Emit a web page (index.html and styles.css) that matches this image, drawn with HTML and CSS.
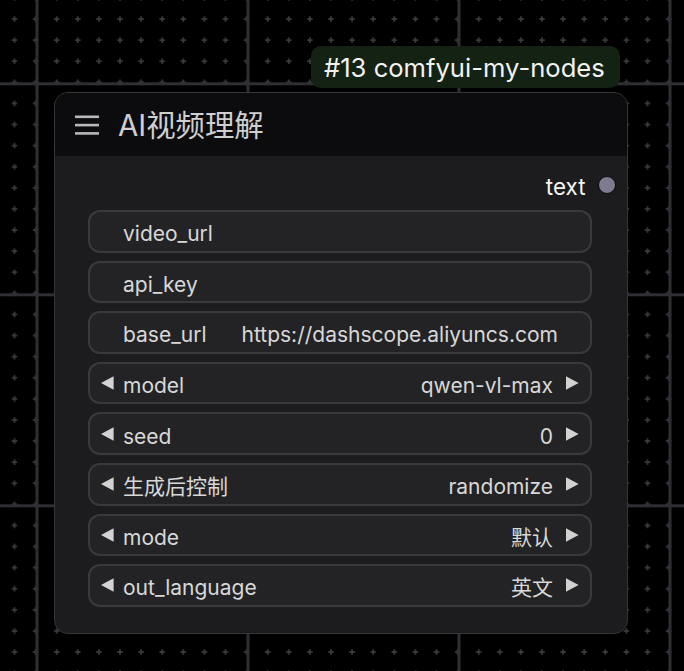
FILE: index.html
```html
<!DOCTYPE html>
<html lang="zh">
<head>
<meta charset="utf-8">
<title>AI视频理解</title>
<link rel="stylesheet" href="styles.css">
</head>
<body>
<div class="canvas">
  <svg class="grid" width="684" height="671" viewBox="0 0 684 671" aria-hidden="true">
    <defs>
      <pattern id="plus" x="3.95" y="8.45" width="21.1" height="21.1" patternUnits="userSpaceOnUse">
        <rect x="7.8" y="9.8" width="5.5" height="1.6" fill="#3d3e44"/>
        <rect x="9.75" y="7.85" width="1.6" height="5.5" fill="#3d3e44"/>
      </pattern>
      <pattern id="major" x="35.5" y="82.3" width="211" height="211" patternUnits="userSpaceOnUse">
        <rect x="0" y="0" width="3" height="211" fill="#2e2f33"/>
        <rect x="0" y="0" width="211" height="3" fill="#2e2f33"/>
      </pattern>
    </defs>
    <rect width="684" height="671" fill="#000"/>
    <rect width="684" height="671" fill="url(#plus)"/>
    <rect width="684" height="671" fill="url(#major)"/>
  </svg>

  <div class="badge">#13 comfyui-my-nodes</div>

  <div class="node">
    <div class="node-title">
      <svg class="menu-icon" width="24" height="20" viewBox="0 0 24 20" aria-hidden="true">
        <rect x="0" y="0.5" width="24" height="2.6" fill="#b8b8b8"/>
        <rect x="0" y="8.8" width="24" height="2.6" fill="#b8b8b8"/>
        <rect x="0" y="17.1" width="24" height="2.6" fill="#b8b8b8"/>
      </svg>
      <span class="title-text">AI视频理解</span>
    </div>
    <div class="node-body">
      <div class="output-row">
        <span class="output-label">text</span>
        <span class="slot"></span>
      </div>
      <div class="widgets">
        <div class="widget text-widget"><span class="label">video_url</span></div>
        <div class="widget text-widget"><span class="label">api_key</span></div>
        <div class="widget text-widget"><span class="label">base_url</span><span class="value">https://dashscope.aliyuncs.com</span></div>
        <div class="widget combo">
          <svg class="arrow left" width="13" height="14" viewBox="0 0 13 14" aria-hidden="true"><path d="M0 7 L12.6 0.3 L12.6 13.7 Z" fill="#d2d2d2"/></svg>
          <span class="label">model</span><span class="value">qwen-vl-max</span>
          <svg class="arrow right" width="13" height="14" viewBox="0 0 13 14" aria-hidden="true"><path d="M12.6 7 L0 0.3 L0 13.7 Z" fill="#d2d2d2"/></svg>
        </div>
        <div class="widget combo">
          <svg class="arrow left" width="13" height="14" viewBox="0 0 13 14" aria-hidden="true"><path d="M0 7 L12.6 0.3 L12.6 13.7 Z" fill="#d2d2d2"/></svg>
          <span class="label">seed</span><span class="value">0</span>
          <svg class="arrow right" width="13" height="14" viewBox="0 0 13 14" aria-hidden="true"><path d="M12.6 7 L0 0.3 L0 13.7 Z" fill="#d2d2d2"/></svg>
        </div>
        <div class="widget combo">
          <svg class="arrow left" width="13" height="14" viewBox="0 0 13 14" aria-hidden="true"><path d="M0 7 L12.6 0.3 L12.6 13.7 Z" fill="#d2d2d2"/></svg>
          <span class="label">生成后控制</span><span class="value">randomize</span>
          <svg class="arrow right" width="13" height="14" viewBox="0 0 13 14" aria-hidden="true"><path d="M12.6 7 L0 0.3 L0 13.7 Z" fill="#d2d2d2"/></svg>
        </div>
        <div class="widget combo">
          <svg class="arrow left" width="13" height="14" viewBox="0 0 13 14" aria-hidden="true"><path d="M0 7 L12.6 0.3 L12.6 13.7 Z" fill="#d2d2d2"/></svg>
          <span class="label">mode</span><span class="value">默认</span>
          <svg class="arrow right" width="13" height="14" viewBox="0 0 13 14" aria-hidden="true"><path d="M12.6 7 L0 0.3 L0 13.7 Z" fill="#d2d2d2"/></svg>
        </div>
        <div class="widget combo">
          <svg class="arrow left" width="13" height="14" viewBox="0 0 13 14" aria-hidden="true"><path d="M0 7 L12.6 0.3 L12.6 13.7 Z" fill="#d2d2d2"/></svg>
          <span class="label">out_language</span><span class="value">英文</span>
          <svg class="arrow right" width="13" height="14" viewBox="0 0 13 14" aria-hidden="true"><path d="M12.6 7 L0 0.3 L0 13.7 Z" fill="#d2d2d2"/></svg>
        </div>
      </div>
    </div>
  </div>
</div>
</body>
</html>
```

FILE: styles.css
```css
html, body {
  margin: 0;
  padding: 0;
  background: #000;
  overflow: hidden;
}

body {
  font-family: Inter, "Noto Sans CJK SC", sans-serif;
}

.canvas {
  position: relative;
  width: 684px;
  height: 671px;
  overflow: hidden;
}

.grid {
  position: absolute;
  left: 0;
  top: 0;
  display: block;
}

.badge {
  position: absolute;
  left: 311px;
  top: 46px;
  width: 309px;
  height: 42px;
  box-sizing: border-box;
  padding-left: 13px;
  padding-top: 1px;
  display: flex;
  align-items: center;
  background: #132213;
  border-radius: 10px;
  color: #f2f2f2;
  font-size: 25.6px;
  white-space: nowrap;
}

.node {
  position: absolute;
  left: 54px;
  top: 92px;
  width: 574px;
  height: 542px;
  box-sizing: border-box;
  border: 1px solid #36363a;
  border-radius: 14px;
  background: #1c1c1e;
  overflow: hidden;
  display: flex;
  flex-direction: column;
}

.node-title {
  height: 63px;
  flex: none;
  background: #0c0c0e;
  display: flex;
  align-items: center;
  padding-left: 20px;
  gap: 19px;
}

.menu-icon {
  display: block;
  flex: none;
}

.title-text {
  color: #cfcfcf;
  font-size: 29.4px;
  line-height: 1;
  padding-top: 2px;
}

.node-body {
  flex: 1;
  display: flex;
  flex-direction: column;
  padding: 14px 35px 0 33px;
}

.output-row {
  height: 30px;
  display: flex;
  justify-content: flex-end;
  align-items: center;
  margin-right: -24px;
  gap: 12px;
  margin-bottom: 10px;
}

.output-label {
  color: #f6f6f6;
  font-size: 22.4px;
  line-height: 1;
  padding-top: 4px;
}

.slot {
  width: 16px;
  height: 16px;
  border-radius: 50%;
  background: #7d7c8f;
  border: 1.5px solid #0a0a0a;
  margin-right: 0.5px;
}

.widgets {
  display: flex;
  flex-direction: column;
  gap: 8px;
}

.widget {
  height: 42.6px;
  box-sizing: border-box;
  border: 2px solid #3a3a3e;
  border-radius: 12px;
  background: #232326;
  display: flex;
  align-items: center;
  color: #d8d8d8;
  font-size: 21px;
  white-space: nowrap;
}

.text-widget {
  padding: 0 32px 0 33px;
}

.combo {
  padding: 0 11px;
}

.label,
.value {
  line-height: 1;
  padding-top: 5px;
}

.value {
  margin-left: auto;
}

.arrow {
  display: block;
  flex: none;
}

.arrow.left {
  margin-right: 9px;
}

.arrow.right {
  margin-left: 13px;
}
```
